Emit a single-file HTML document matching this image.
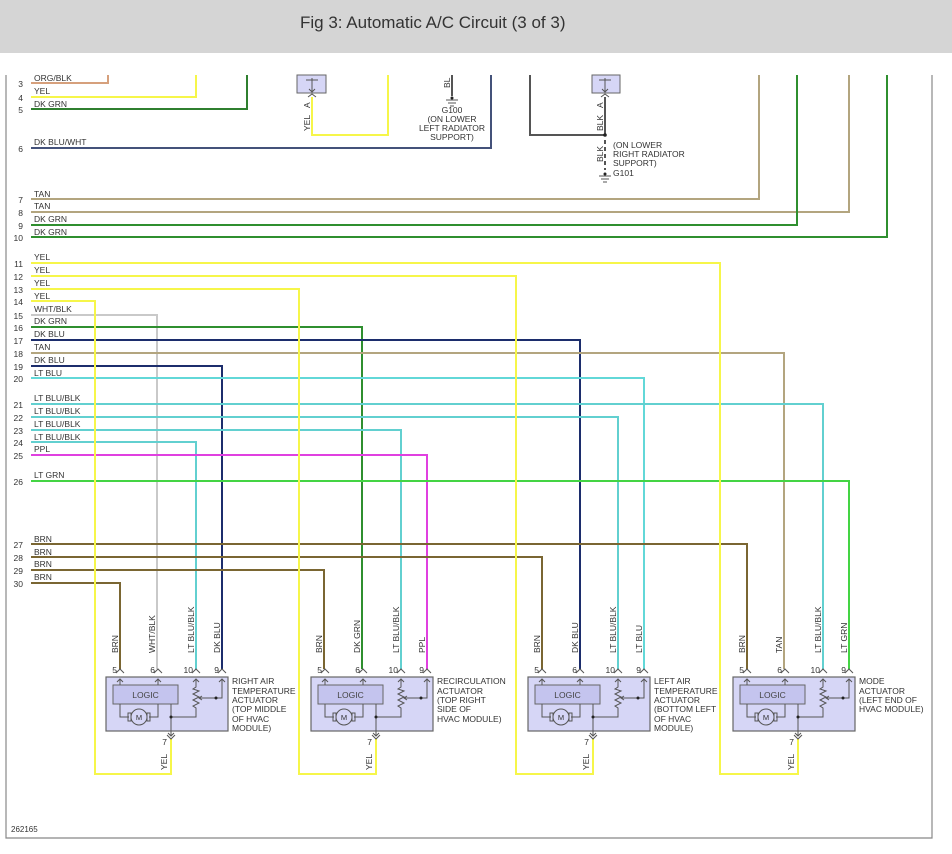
<!DOCTYPE html>
<html><head><meta charset="utf-8"><style>
html,body{margin:0;padding:0;background:#fff}
body{width:952px;height:854px;overflow:hidden;font-family:"Liberation Sans",sans-serif}
.hdr{position:absolute;left:0;top:0;width:952px;height:53px;background:#d5d5d5;line-height:46px;font-size:17px;color:#333}
.hdr span{position:absolute;left:300px;top:0}
svg{position:absolute;left:0;top:0}
</style></head><body>
<div class="hdr"><span>Fig 3: Automatic A/C Circuit (3 of 3)</span></div>
<svg width="952" height="854" viewBox="0 0 952 854" font-family="Liberation Sans, sans-serif" font-size="8.5" fill="#333">
<defs>
<g id="act">
<rect x="0" y="677" width="122" height="54" fill="#d6d6f6" stroke="#666" stroke-width="1.2"/>
<rect x="7" y="685" width="65" height="19" fill="#c4c4ee" stroke="#666"/>
<text x="39.5" y="698" text-anchor="middle" font-size="8.5" fill="#444">LOGIC</text>
<g stroke="#555" fill="none" stroke-width="1">
<path d="M14 685V679M11 682L14 679L17 682M52 685V679M49 682L52 679L55 682"/>
<path d="M14 704V717H23M52 704V717H43"/>
<circle cx="33" cy="717" r="8" fill="#d6d6f6"/>
<rect x="22" y="713" width="3" height="8"/><rect x="41" y="713" width="3" height="8"/>
<path d="M65 704V736M62 733L65 736L68 733M65 717H90V708L87 706L93 703L87 700L93 697L87 694L93 691L87 689L90 687V679M87 682L90 679L93 682"/>
<path d="M116 679V698H93M113 682L116 679L119 682M96 696L93 698L96 700"/>
<path d="M10 673L14 669L18 673M48 673L52 669L56 673M86 673L90 669L94 673M112 673L116 669L120 673M61 735L65 739L69 735"/>
</g>
<text x="33" y="720" text-anchor="middle" font-size="7.5">M</text>
<circle cx="65" cy="717" r="1.5" fill="#222"/><circle cx="110" cy="698" r="1.5" fill="#222"/>
<text x="11" y="673" text-anchor="end">5</text>
<text x="49" y="673" text-anchor="end">6</text>
<text x="87" y="673" text-anchor="end">10</text>
<text x="113" y="673" text-anchor="end">9</text>
<text x="61" y="745" text-anchor="end">7</text>
<text transform="translate(61,770) rotate(-90)">YEL</text>
</g>
</defs>
<g fill="none" stroke-width="2">
<path d="M6 75V838H932V75" stroke="#888" stroke-width="1.2"/>
<path d="M31 83H108V75" stroke="#d6a07c"/>
<path d="M31 97H196V75" stroke="#f6f64a"/>
<path d="M31 109H247V75" stroke="#2f7f2f"/>
<path d="M31 148H491V75" stroke="#44527a"/>
<path d="M31 199H759V75" stroke="#b3a57f"/>
<path d="M31 212H849V75" stroke="#b3a57f"/>
<path d="M31 225H797V75" stroke="#2f8f2f"/>
<path d="M31 237H887V75" stroke="#2f8f2f"/>
<path d="M312 97V135H388V75" stroke="#f6f64a"/>
<path d="M605 97V135H530V75" stroke="#555"/>
<path d="M605 140V170" stroke="#555" stroke-dasharray="4,3"/>
<path d="M452 75V96" stroke="#555"/>
<path d="M31 315H157V669" stroke="#c9c9c9"/>
<path d="M31 327H362V669" stroke="#2f8f2f"/>
<path d="M31 340H580V669" stroke="#1c2d6c"/>
<path d="M31 353H784V669" stroke="#b3a57f"/>
<path d="M31 366H222V669" stroke="#1c2d6c"/>
<path d="M31 378H644V669" stroke="#62d8d8"/>
<path d="M31 404H823V669" stroke="#62d0d0"/>
<path d="M31 417H618V669" stroke="#62d0d0"/>
<path d="M31 430H401V669" stroke="#62d0d0"/>
<path d="M31 442H196V669" stroke="#62d0d0"/>
<path d="M31 455H427V669" stroke="#e040e0"/>
<path d="M31 481H849V669" stroke="#44d444"/>
<path d="M31 544H747V669" stroke="#7a6632"/>
<path d="M31 557H542V669" stroke="#7a6632"/>
<path d="M31 570H324V669" stroke="#7a6632"/>
<path d="M31 583H120V669" stroke="#7a6632"/>
<path d="M31 263H720V774H798V739" stroke="#f6f64a"/>
<path d="M31 276H516V774H593V739" stroke="#f6f64a"/>
<path d="M31 289H299V774H376V739" stroke="#f6f64a"/>
<path d="M31 301H95V774H171V739" stroke="#f6f64a"/>
</g>
<rect x="297" y="75" width="29" height="18" fill="#d6d6f6" stroke="#666"/>
<rect x="592" y="75" width="28" height="18" fill="#d6d6f6" stroke="#666"/>
<g stroke="#555" fill="none" stroke-width="1">
<path d="M312 78V92M309 89L312 92L315 89M306 80H318M308 97L312 94L316 97"/>
<path d="M605 78V92M602 89L605 92L608 89M599 80H611M601 97L605 94L609 97"/>
<path d="M446 100H458M448 103H456M450 106H454"/>
<path d="M599 176H611M601 179H609M603 182H607"/>
</g>
<circle cx="452" cy="98" r="1.5" fill="#222"/><circle cx="605" cy="135" r="1.8" fill="#222"/><circle cx="605" cy="174" r="1.5" fill="#222"/>
<text transform="translate(310,108) rotate(-90)">A</text>
<text transform="translate(310,131) rotate(-90)">YEL</text>
<text transform="translate(450,88) rotate(-90)">BL</text>
<text transform="translate(603,108) rotate(-90)">A</text>
<text transform="translate(603,131) rotate(-90)">BLK</text>
<text transform="translate(603,162) rotate(-90)">BLK</text>
<g text-anchor="middle"><text x="452" y="113">G100</text><text x="452" y="122">(ON LOWER</text><text x="452" y="131">LEFT RADIATOR</text><text x="452" y="140">SUPPORT)</text></g>
<text x="613" y="148">(ON LOWER</text><text x="613" y="157">RIGHT RADIATOR</text><text x="613" y="166">SUPPORT)</text><text x="613" y="176">G101</text>
<g text-anchor="end">
<text x="23" y="87">3</text><text x="23" y="101">4</text><text x="23" y="113">5</text><text x="23" y="152">6</text>
<text x="23" y="203">7</text><text x="23" y="216">8</text><text x="23" y="229">9</text><text x="23" y="241">10</text>
<text x="23" y="267">11</text><text x="23" y="280">12</text><text x="23" y="293">13</text><text x="23" y="305">14</text>
<text x="23" y="319">15</text><text x="23" y="331">16</text><text x="23" y="344">17</text><text x="23" y="357">18</text>
<text x="23" y="370">19</text><text x="23" y="382">20</text><text x="23" y="408">21</text><text x="23" y="421">22</text>
<text x="23" y="434">23</text><text x="23" y="446">24</text><text x="23" y="459">25</text><text x="23" y="485">26</text>
<text x="23" y="548">27</text><text x="23" y="561">28</text><text x="23" y="574">29</text><text x="23" y="587">30</text>
</g>
<g>
<text x="34" y="81">ORG/BLK</text><text x="34" y="94">YEL</text><text x="34" y="107">DK GRN</text><text x="34" y="145">DK BLU/WHT</text>
<text x="34" y="197">TAN</text><text x="34" y="209">TAN</text><text x="34" y="222">DK GRN</text><text x="34" y="235">DK GRN</text>
<text x="34" y="260">YEL</text><text x="34" y="273">YEL</text><text x="34" y="286">YEL</text><text x="34" y="299">YEL</text>
<text x="34" y="312">WHT/BLK</text><text x="34" y="324">DK GRN</text><text x="34" y="337">DK BLU</text><text x="34" y="350">TAN</text>
<text x="34" y="363">DK BLU</text><text x="34" y="376">LT BLU</text><text x="34" y="401">LT BLU/BLK</text><text x="34" y="414">LT BLU/BLK</text>
<text x="34" y="427">LT BLU/BLK</text><text x="34" y="440">LT BLU/BLK</text><text x="34" y="452">PPL</text><text x="34" y="478">LT GRN</text>
<text x="34" y="542">BRN</text><text x="34" y="555">BRN</text><text x="34" y="567">BRN</text><text x="34" y="580">BRN</text>
</g>
<use href="#act" x="106"/>
<use href="#act" x="311"/>
<use href="#act" x="528"/>
<use href="#act" x="733"/>
<g>
<text transform="translate(118,653) rotate(-90)">BRN</text>
<text transform="translate(155,653) rotate(-90)">WHT/BLK</text>
<text transform="translate(194,653) rotate(-90)">LT BLU/BLK</text>
<text transform="translate(220,653) rotate(-90)">DK BLU</text>
<text transform="translate(322,653) rotate(-90)">BRN</text>
<text transform="translate(360,653) rotate(-90)">DK GRN</text>
<text transform="translate(399,653) rotate(-90)">LT BLU/BLK</text>
<text transform="translate(425,653) rotate(-90)">PPL</text>
<text transform="translate(540,653) rotate(-90)">BRN</text>
<text transform="translate(578,653) rotate(-90)">DK BLU</text>
<text transform="translate(616,653) rotate(-90)">LT BLU/BLK</text>
<text transform="translate(642,653) rotate(-90)">LT BLU</text>
<text transform="translate(745,653) rotate(-90)">BRN</text>
<text transform="translate(782,653) rotate(-90)">TAN</text>
<text transform="translate(821,653) rotate(-90)">LT BLU/BLK</text>
<text transform="translate(847,653) rotate(-90)">LT GRN</text>
</g>
<g>
<text x="232" y="684">RIGHT AIR</text><text x="232" y="694">TEMPERATURE</text><text x="232" y="703">ACTUATOR</text><text x="232" y="712">(TOP MIDDLE</text><text x="232" y="722">OF HVAC</text><text x="232" y="731">MODULE)</text>
<text x="437" y="684">RECIRCULATION</text><text x="437" y="694">ACTUATOR</text><text x="437" y="703">(TOP RIGHT</text><text x="437" y="712">SIDE OF</text><text x="437" y="722">HVAC MODULE)</text>
<text x="654" y="684">LEFT AIR</text><text x="654" y="694">TEMPERATURE</text><text x="654" y="703">ACTUATOR</text><text x="654" y="712">(BOTTOM LEFT</text><text x="654" y="722">OF HVAC</text><text x="654" y="731">MODULE)</text>
<text x="859" y="684">MODE</text><text x="859" y="694">ACTUATOR</text><text x="859" y="703">(LEFT END OF</text><text x="859" y="712">HVAC MODULE)</text>
</g>
<text x="11" y="832" font-size="8">262165</text>
</svg>
</body></html>
